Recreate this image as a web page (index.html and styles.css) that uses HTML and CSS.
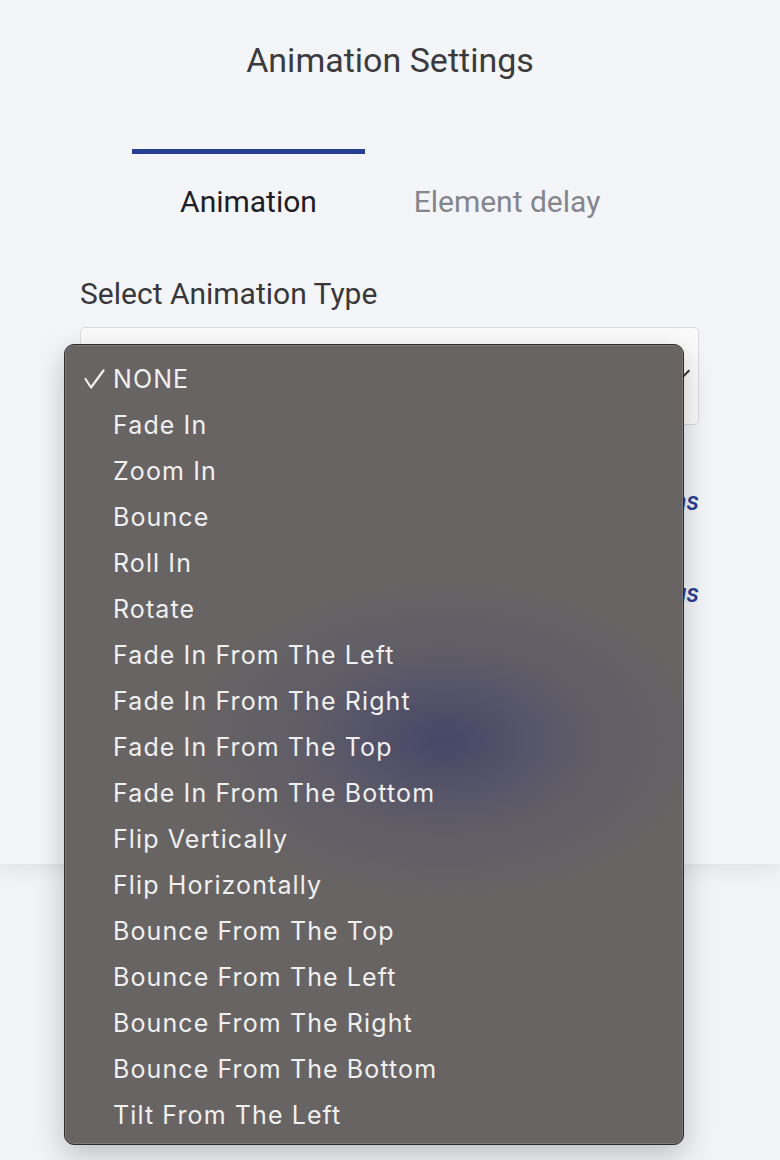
FILE: index.html
```html
<!DOCTYPE html>
<html>
<head>
<meta charset="utf-8">
<link rel="stylesheet" href="styles.css">
</head>
<body>
<div class="panel">
  <h1 class="title">Animation Settings</h1>
  <div class="tabs">
    <div class="tab active">Animation</div>
    <div class="tab">Element delay</div>
  </div>
  <div class="field">
    <label class="label">Select Animation Type</label>
    <div class="select">
      <span class="chev"></span>
    </div>
    <div class="links">
      <a class="link">Preview animations</a>
      <a class="link">Reset all settings</a>
    </div>
  </div>
</div>
<div class="footer"></div>

<ul class="menu">
  <li class="item checked"><svg class="check" width="22" height="22" viewBox="0 0 22 22"><path d="M2.5 11 L8 19.5 L20.5 2.5" fill="none" stroke="#f1f0f0" stroke-width="2.2" stroke-linecap="round" stroke-linejoin="round"/></svg>NONE</li>
  <li class="item">Fade In</li>
  <li class="item">Zoom In</li>
  <li class="item">Bounce</li>
  <li class="item">Roll In</li>
  <li class="item">Rotate</li>
  <li class="item">Fade In From The Left</li>
  <li class="item">Fade In From The Right</li>
  <li class="item">Fade In From The Top</li>
  <li class="item">Fade In From The Bottom</li>
  <li class="item">Flip Vertically</li>
  <li class="item">Flip Horizontally</li>
  <li class="item">Bounce From The Top</li>
  <li class="item">Bounce From The Left</li>
  <li class="item">Bounce From The Right</li>
  <li class="item">Bounce From The Bottom</li>
  <li class="item">Tilt From The Left</li>
</ul>
</body>
</html>
```

FILE: styles.css
```css
html, body {
  margin: 0;
  padding: 0;
  background: #f2f3f7;
  font-family: Roboto, "Liberation Sans", sans-serif;
  height: 1160px;
  overflow: hidden;
}

.panel {
  position: relative;
  z-index: 1;
  height: 864px;
  background: #f4f5f9;
  box-shadow: 0 6px 18px rgba(0, 0, 0, 0.07);
  box-sizing: border-box;
  padding-top: 40px;
}

.title {
  margin: 0;
  text-align: center;
  font-size: 34px;
  font-weight: 400;
  line-height: 40px;
  color: #3b3b3e;
}

.tabs {
  display: flex;
  margin: 69px 0 0 132px;
}

.tab {
  width: 233px;
  box-sizing: border-box;
  border-top: 5px solid transparent;
  padding-top: 30px;
  text-align: center;
  font-size: 30px;
  line-height: 36px;
  color: #85858d;
}

.tab + .tab {
  width: 284px;
}

.tab.active {
  border-top-color: #273f93;
  color: #1e1e24;
}

.field {
  padding: 57px 81px 0 80px;
}

.label {
  display: block;
  font-size: 30px;
  line-height: 34px;
  color: #38383b;
}

.select {
  margin-top: 16px;
  height: 98px;
  box-sizing: border-box;
  background: #fbfbfc;
  border: 1px solid #dcdcdf;
  border-radius: 5px;
  position: relative;
}

.chev {
  position: absolute;
  right: 10px;
  top: 38px;
  width: 8px;
  height: 8px;
  border-right: 2px solid #333;
  border-bottom: 2px solid #333;
  transform: rotate(45deg);
}

.links {
  display: flex;
  flex-direction: column;
  align-items: flex-end;
  gap: 62px;
  padding-top: 62px;
}

.link {
  font-size: 25px;
  line-height: 30px;
  font-style: italic;
  font-weight: 500;
  color: #2a3e90;
}

.footer {
  height: 296px;
  background: #f2f3f7;
}

.menu {
  position: absolute;
  z-index: 5;
  left: 64px;
  top: 344px;
  width: 620px;
  height: 801px;
  box-sizing: border-box;
  margin: 0;
  padding: 11px 0 0 0;
  list-style: none;
  border-radius: 10px;
  border: 1px solid #2e2c2c;
  background:
    radial-gradient(ellipse 260px 160px at 380px 395px, rgba(66, 68, 105, 0.9), rgba(85, 83, 108, 0.5) 50%, rgba(104, 100, 100, 0) 100%),
    #686464;
  box-shadow: inset 0 0 0 1px rgba(255, 255, 255, 0.14), 0 10px 30px rgba(0, 0, 0, 0.22);
}

.item {
  position: relative;
  height: 46px;
  line-height: 46px;
  padding-left: 48px;
  font-family: Inter, "Noto Sans", sans-serif;
  font-size: 25px;
  letter-spacing: 1.1px;
  color: #f1f0f0;
  white-space: nowrap;
}

.check {
  position: absolute;
  left: 18px;
  top: 12px;
}
```
